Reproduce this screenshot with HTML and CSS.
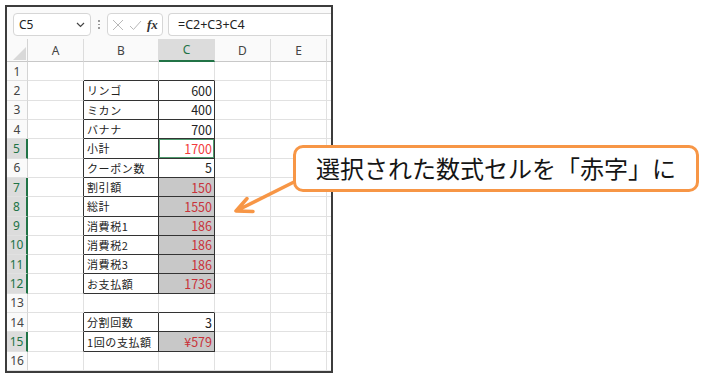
FILE: index.html
```html
<!DOCTYPE html>
<html lang="ja">

<head>
    <meta charset="UTF-8">
    <title>数式セルを赤字に</title>
    <link rel="stylesheet" href="styles.css">
</head>

<body>
    <div class="shot">
        <div class="formula-bar">
            <div class="name-box">
                <span>C5</span>
                <svg class="chev" width="9" height="6" viewBox="0 0 9 6"><path d="M1 1l3.5 3.5L8 1" fill="none" stroke="#444" stroke-width="1.2"/></svg>
            </div>
            <div class="dots"><i></i><i></i><i></i></div>
            <div class="fx-box">
                <svg width="12" height="12" viewBox="0 0 12 12"><path d="M1 1l10 10M11 1L1 11" stroke="#b8b8b8" stroke-width="1"/></svg>
                <svg width="13" height="12" viewBox="0 0 13 12"><path d="M1 7l3.5 3.5L12 2" fill="none" stroke="#b8b8b8" stroke-width="1"/></svg>
                <span class="fx">fx</span>
            </div>
            <div class="formula">=C2+C3+C4</div>
        </div>

        <div class="sheet">
            <div class="corner"><svg width="13" height="13" viewBox="0 0 13 13"><polygon points="0,13 13,0 13,13" fill="#d9d9d9"/></svg></div>
            <div class="ch">A</div>
            <div class="ch">B</div>
            <div class="ch on">C</div>
            <div class="ch">D</div>
            <div class="ch">E</div>
            <div class="ch"></div>

            <div class="rh">1</div><div class="c"></div><div class="c tt"></div><div class="c tt"></div><div class="c"></div><div class="c"></div><div class="c"></div>
            <div class="rh">2</div><div class="c tl"></div><div class="c t lbl">リンゴ</div><div class="c t num">600</div><div class="c"></div><div class="c"></div><div class="c"></div>
            <div class="rh">3</div><div class="c tl"></div><div class="c t lbl">ミカン</div><div class="c t num">400</div><div class="c"></div><div class="c"></div><div class="c"></div>
            <div class="rh">4</div><div class="c tl"></div><div class="c t lbl">バナナ</div><div class="c t num">700</div><div class="c"></div><div class="c"></div><div class="c"></div>
            <div class="rh on">5</div><div class="c tl"></div><div class="c t lbl">小計</div><div class="c t num active">1700</div><div class="c"></div><div class="c"></div><div class="c"></div>
            <div class="rh">6</div><div class="c tl"></div><div class="c t lbl">クーポン数</div><div class="c t num">5</div><div class="c"></div><div class="c"></div><div class="c"></div>
            <div class="rh on">7</div><div class="c tl"></div><div class="c t lbl">割引額</div><div class="c t num sel">150</div><div class="c"></div><div class="c"></div><div class="c"></div>
            <div class="rh on">8</div><div class="c tl"></div><div class="c t lbl">総計</div><div class="c t num sel">1550</div><div class="c"></div><div class="c"></div><div class="c"></div>
            <div class="rh on">9</div><div class="c tl"></div><div class="c t lbl">消費税1</div><div class="c t num sel">186</div><div class="c"></div><div class="c"></div><div class="c"></div>
            <div class="rh on">10</div><div class="c tl"></div><div class="c t lbl">消費税2</div><div class="c t num sel">186</div><div class="c"></div><div class="c"></div><div class="c"></div>
            <div class="rh on">11</div><div class="c tl"></div><div class="c t lbl">消費税3</div><div class="c t num sel">186</div><div class="c"></div><div class="c"></div><div class="c"></div>
            <div class="rh on">12</div><div class="c tl"></div><div class="c t lbl">お支払額</div><div class="c t num sel">1736</div><div class="c"></div><div class="c"></div><div class="c"></div>
            <div class="rh">13</div><div class="c"></div><div class="c tt"></div><div class="c tt"></div><div class="c"></div><div class="c"></div><div class="c"></div>
            <div class="rh">14</div><div class="c tl"></div><div class="c t lbl">分割回数</div><div class="c t num">3</div><div class="c"></div><div class="c"></div><div class="c"></div>
            <div class="rh on">15</div><div class="c tl"></div><div class="c t lbl">1回の支払額</div><div class="c t num sel">¥579</div><div class="c"></div><div class="c"></div><div class="c"></div>
            <div class="rh">16</div><div class="c"></div><div class="c"></div><div class="c"></div><div class="c"></div><div class="c"></div><div class="c"></div>
        </div>
    </div>

    <!-- arrow from the callout to the selected cells -->
    <svg class="arrow" width="70" height="45" viewBox="230 175 70 45">
        <path d="M296 181L237 210.5M247 198.5L236 211L253 211.5" fill="none" stroke="#f79646" stroke-width="3.5" stroke-linecap="round" stroke-linejoin="round"/>
    </svg>

    <div class="callout">選択された数式セルを「赤字」に</div>
</body>

</html>
```

FILE: styles.css
```css
body {
    margin: 0;
    padding: 0;
    background-color: white;
    font-family: 'Segoe UI', 'Noto Sans', 'Noto Sans CJK JP', sans-serif;
    color: #222;
}

.shot {
    margin: 5px 0 0 5px;
    width: 328px;
    height: 368px;
    box-sizing: border-box;
    border: 2px solid #3c3c3c;
    background-color: white;
    overflow: hidden;
}

/* formula bar */
.formula-bar {
    height: 32px;
    display: flex;
    align-items: flex-end;
    padding: 0 0 3px 6px;
    box-sizing: border-box;
    background-color: #fafafa;
}

.name-box {
    width: 78px;
    height: 23px;
    box-sizing: border-box;
    border: 1px solid #d6d6d6;
    border-radius: 4px;
    background-color: white;
    display: flex;
    align-items: center;
    justify-content: space-between;
    padding: 0 5px 0 5px;
    font-size: 12px;
}

.dots {
    width: 16px;
    height: 23px;
    display: flex;
    flex-direction: column;
    align-items: center;
    justify-content: center;
    gap: 2px;
}

.dots i {
    width: 1.5px;
    height: 1.5px;
    background-color: #999;
}

.fx-box {
    width: 56px;
    height: 23px;
    box-sizing: border-box;
    border: 1px solid #d6d6d6;
    border-radius: 4px;
    background-color: white;
    display: flex;
    align-items: center;
    gap: 5px;
    padding-left: 4px;
}

.fx {
    font-family: 'Liberation Serif', serif;
    font-style: italic;
    font-weight: bold;
    font-size: 13px;
    color: #333;
}

.formula {
    flex: 1;
    height: 23px;
    margin-left: 5px;
    box-sizing: border-box;
    border: 1px solid #d6d6d6;
    border-right: none;
    border-radius: 4px 0 0 4px;
    background-color: white;
    display: flex;
    align-items: center;
    padding-left: 9px;
    font-size: 12.5px;
}

/* grid */
.sheet {
    display: grid;
    grid-template-columns: 21px 56px 75px 56px 56px 56px 1fr;
    grid-template-rows: 23px repeat(16, 1fr);
    height: 332px;
    font-size: 12px;
}

.corner {
    border-right: 1px solid #d4d4d4;
    border-bottom: 1px solid #c8c8c8;
    display: flex;
    align-items: flex-end;
    justify-content: flex-end;
    padding: 0 1px 1px 0;
    background-color: #fafafa;
}

.ch {
    border-right: 1px solid #dcdcdc;
    border-bottom: 1px solid #c8c8c8;
    background-color: #fafafa;
    display: flex;
    align-items: center;
    justify-content: center;
    color: #444;
}

.ch.on {
    background-color: #dcdcdc;
    color: #217346;
    border-bottom: 2px solid #217346;
}

.rh {
    border-right: 1px solid #d4d4d4;
    border-bottom: 1px solid #e1e1e1;
    background-color: #fafafa;
    display: flex;
    align-items: center;
    justify-content: center;
    color: #444;
}

.rh.on {
    background-color: #dcdcdc;
    color: #217346;
    border-right: 2px solid #217346;
}

.c {
    border-right: 1px solid #e1e1e1;
    border-bottom: 1px solid #e1e1e1;
    display: flex;
    align-items: center;
    padding: 0 2px;
    white-space: nowrap;
    overflow: hidden;
}

.c.t {
    border-right-color: #333;
    border-bottom-color: #333;
}

.c.tl {
    border-right-color: #333;
}

.c.tt {
    border-bottom-color: #333;
}

.lbl {
    font-family: 'Noto Sans CJK JP', sans-serif;
    font-size: 11px;
    letter-spacing: 0.6px;
    padding-left: 3px;
}

.num {
    justify-content: flex-end;
    font-family: 'Noto Sans CJK JP', sans-serif;
    font-size: 12.5px;
}

.num.sel {
    background-color: #c8c8c8;
    color: #c8323a;
}

.num.active {
    color: #f23c3c;
    box-shadow: inset 0 0 0 1px #4e9a6c;
}

/* callout */
.callout {
    position: absolute;
    left: 293px;
    top: 145px;
    width: 406px;
    height: 47px;
    box-sizing: border-box;
    border: 3px solid #f79646;
    border-radius: 10px;
    background-color: white;
    display: flex;
    align-items: center;
    justify-content: center;
    font-family: 'Noto Sans CJK JP', sans-serif;
    font-size: 24px;
    color: #151515;
    padding-bottom: 3px;
}

.arrow {
    position: absolute;
    left: 230px;
    top: 175px;
}
```
